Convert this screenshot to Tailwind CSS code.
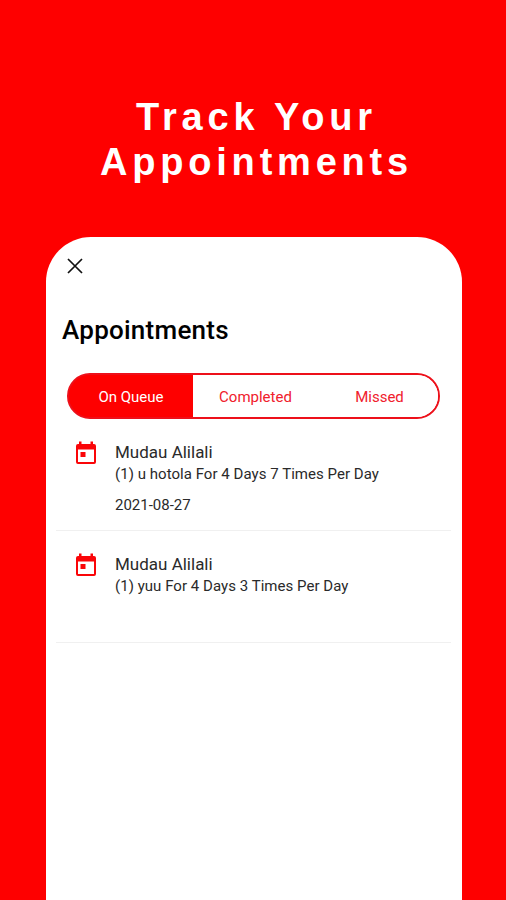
<!DOCTYPE html>
<html lang="en">
<head>
<meta charset="utf-8">
<title>Track Your Appointments</title>
<script src="https://cdn.jsdelivr.net/npm/@tailwindcss/browser@4"></script>
</head>
<body class="w-[506px] h-[900px] overflow-hidden bg-[#fe0000] font-[Roboto,sans-serif] flex flex-col">
<h1 class="pt-[95px] pl-[7px] h-[236.5px] shrink-0 text-center text-white font-bold font-['Liberation_Sans',sans-serif] text-[38px] leading-[45px] tracking-[4.8px]">Track Your<br>Appointments</h1>
<main class="ml-[45.5px] mr-[44px] flex-1 bg-white rounded-t-[45px]">
<svg class="ml-[21px] mt-[21.5px] size-4" viewBox="0 0 16 16" fill="none" stroke="#111" stroke-width="1.7"><path d="M1 1l14 14M15 1L1 15"/></svg>
<h2 class="ml-[16.5px] mt-[40px] text-[26px] leading-[32px] font-medium tracking-[0.25px] text-black">Appointments</h2>
<div class="ml-[21.5px] mt-[27px] w-[373px] h-[46px] rounded-full border-2 border-[#ed101a] bg-[linear-gradient(90deg,#fe0000_50%,#fff_50%)] overflow-hidden flex text-[15px] text-[#f0202c] text-center leading-[45px]">
<div class="w-[124px] -ml-px pl-px box-content bg-[#fe0000] text-white">On Queue</div><div class="w-[125px] bg-white">Completed</div><div class="flex-1 bg-white pl-[3px]">Missed</div>
</div>
<section class="ml-[10.5px] mr-[11px] h-[112px] border-b border-[#f0f0f0] flex pt-[22px] pl-[19px] text-[#2a2a2a]">
<svg class="w-[22px] h-[24px] mr-[18px] shrink-0" viewBox="0 0 22 24" fill="#fa0508"><path fill-rule="evenodd" d="M4 .5h2.5V3h9V.5H18V3h1a2 2 0 0 1 2 2v16a2 2 0 0 1-2 2H3a2 2 0 0 1-2-2V5a2 2 0 0 1 2-2h1zM3 8.5V21h16V8.5zM5.5 11h5v5h-5z"/></svg>
<div><div class="text-[17px] leading-[22px]">Mudau Alilali</div><div class="text-[15px] leading-[20px] mt-px tracking-[0.04px]">(1) u hotola For 4 Days 7 Times Per Day</div><div class="text-[15px] leading-[20px] mt-[11px]">2021-08-27</div></div>
</section>
<section class="ml-[10.5px] mr-[11px] h-[112px] border-b border-[#f0f0f0] flex pt-[22px] pl-[19px] text-[#2a2a2a]">
<svg class="w-[22px] h-[24px] mr-[18px] shrink-0" viewBox="0 0 22 24" fill="#fa0508"><path fill-rule="evenodd" d="M4 .5h2.5V3h9V.5H18V3h1a2 2 0 0 1 2 2v16a2 2 0 0 1-2 2H3a2 2 0 0 1-2-2V5a2 2 0 0 1 2-2h1zM3 8.5V21h16V8.5zM5.5 11h5v5h-5z"/></svg>
<div><div class="text-[17px] leading-[22px]">Mudau Alilali</div><div class="text-[15px] leading-[20px] mt-px tracking-[0.04px]">(1) yuu For 4 Days 3 Times Per Day</div></div>
</section>
</main>
</body>
</html>
